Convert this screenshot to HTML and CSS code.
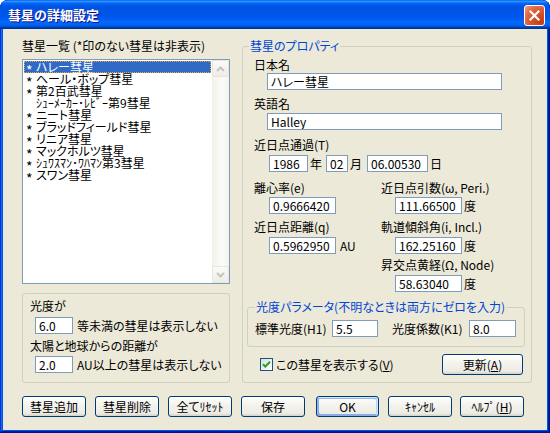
FILE: index.html
```html
<!DOCTYPE html>
<html lang="ja">
<head>
<meta charset="utf-8">
<title>彗星の詳細設定</title>
<link rel="stylesheet" href="styles.css">
</head>
<body>
<div class="window">
  <div class="titlebar">
    <span class="title">彗星の詳細設定</span>
    <span class="close"><svg width="13" height="13" viewBox="0 0 13 13"><path d="M2.5 2.5 L10.5 10.5 M10.5 2.5 L2.5 10.5" stroke="#fff" stroke-width="2.2" stroke-linecap="square" fill="none"/></svg></span>
  </div>
  <div class="client">
    <div class="main">
      <div class="left">
        <div class="list-label">彗星一覧 (*印のない彗星は非表示)</div>
        <div class="listbox">
          <ul class="items">
            <li class="sel"><span class="mark">*</span>ハレー彗星</li>
            <li><span class="mark">*</span>ヘール・ボップ彗星</li>
            <li><span class="mark">*</span>第2百武彗星</li>
            <li><span class="mark"></span>ｼｭｰﾒｰｶｰ･ﾚﾋﾞｰ第9彗星</li>
            <li><span class="mark">*</span>ニート彗星</li>
            <li><span class="mark">*</span>ブラッドフィールド彗星</li>
            <li><span class="mark">*</span>リニア彗星</li>
            <li><span class="mark">*</span>マックホルツ彗星</li>
            <li><span class="mark">*</span>ｼｭﾜｽﾏﾝ･ﾜﾊﾏﾝ第3彗星</li>
            <li><span class="mark">*</span>スワン彗星</li>
          </ul>
          <div class="scrollbar">
            <div class="sbtn"><svg width="9" height="6" viewBox="0 0 9 6"><path d="M1 5 L4.5 1.5 L8 5" stroke="#C6C5BB" stroke-width="2" fill="none"/></svg></div>
            <div class="track"></div>
            <div class="sbtn"><svg width="9" height="6" viewBox="0 0 9 6"><path d="M1 1 L4.5 4.5 L8 1" stroke="#C6C5BB" stroke-width="2" fill="none"/></svg></div>
          </div>
        </div>
        <div class="filter">
          <div class="flabel">光度が</div>
          <div class="frow frow1"><input class="tb w38" type="text" value="6.0"><span class="ftext">等未満の彗星は表示しない</span></div>
          <div class="flabel flabel2">太陽と地球からの距離が</div>
          <div class="frow frow2"><input class="tb w38" type="text" value="2.0"><span class="ftext">AU以上の彗星は表示しない</span></div>
        </div>
      </div>
      <fieldset class="props">
        <legend>彗星のプロパティ</legend>
        <div class="lbl l-jp">日本名</div>
        <input class="tb name n1" type="text" value="ハレー彗星">
        <div class="lbl l-en">英語名</div>
        <input class="tb name n2" type="text" value="Halley">
        <div class="lbl l-t">近日点通過(T)</div>
        <div class="date-row">
          <input class="tb w39" type="text" value="1986"><span class="unit u-y">年</span>
          <input class="tb w22" type="text" value="02"><span class="unit u-m">月</span>
          <input class="tb w61" type="text" value="06.00530"><span class="unit u-d">日</span>
        </div>
        <div class="elements">
          <div class="col col-l">
            <div class="lbl">離心率(e)</div>
            <div class="vrow r1"><input class="tb w67" type="text" value="0.9666420"></div>
            <div class="lbl g2">近日点距離(q)</div>
            <div class="vrow r2"><input class="tb w67" type="text" value="0.5962950"><span class="unit u-au">AU</span></div>
          </div>
          <div class="col col-r">
            <div class="lbl">近日点引数(ω, Peri.)</div>
            <div class="vrow r1"><input class="tb w67" type="text" value="111.66500"><span class="unit u-deg">度</span></div>
            <div class="lbl g2">軌道傾斜角(i, Incl.)</div>
            <div class="vrow r2"><input class="tb w67" type="text" value="162.25160"><span class="unit u-deg">度</span></div>
            <div class="lbl g3">昇交点黄経(Ω, Node)</div>
            <div class="vrow r2"><input class="tb w67" type="text" value="58.63040"><span class="unit u-deg">度</span></div>
          </div>
        </div>
        <fieldset class="photo">
          <legend>光度パラメータ(不明なときは両方にゼロを入力)</legend>
          <div class="photo-row">
            <span>標準光度(H1)</span>
            <input class="tb" type="text" value="5.5">
            <span class="pl2">光度係数(K1)</span>
            <input class="tb" type="text" value="8.0">
          </div>
        </fieldset>
        <div class="check-row">
          <span class="checkbox"><svg width="11" height="11" viewBox="0 0 11 11"><path d="M2 5.2 L4.3 7.6 L9 2.8" stroke="#21A121" stroke-width="2" fill="none"/></svg></span>
          <span class="check-label">この彗星を表示する(<u>V</u>)</span>
          <button class="btn upd" type="button">更新(<u>A</u>)</button>
        </div>
      </fieldset>
    </div>
    <div class="buttons">
      <button class="btn" type="button">彗星追加</button>
      <button class="btn" type="button">彗星削除</button>
      <button class="btn" type="button">全てﾘｾｯﾄ</button>
      <button class="btn" type="button">保存</button>
      <button class="btn ok" type="button">OK</button>
      <button class="btn cancel" type="button">ｷｬﾝｾﾙ</button>
      <button class="btn help" type="button">ﾍﾙﾌﾟ(<u>H</u>)</button>
    </div>
  </div>
</div>
</body>
</html>
```

FILE: styles.css
```css
* { box-sizing: border-box; }
html, body { margin: 0; padding: 0; }
body {
  background: #ffffff;
  font-family: "Noto Sans CJK JP", sans-serif;
  font-size: 12px;
  color: #000;
  font-feature-settings: "palt";
}
.window {
  width: 550px;
  height: 433px;
  background: #0054E3;
  border-radius: 8px 8px 0 0;
  display: flex;
  flex-direction: column;
  overflow: hidden;
  box-shadow: inset -1px -1px #00138c, inset 1px 1px #0831d9, inset -2px -2px #001ea0, inset 2px 2px #166aee;
}
.titlebar {
  height: 29px;
  flex: none;
  display: flex;
  align-items: center;
  justify-content: space-between;
  padding: 0 5px 0 8px;
  border-radius: 8px 8px 0 0;
  background: linear-gradient(180deg, #0058ee 0%, #3593ff 4%, #288eff 6%, #127dff 8%, #036ffc 10%, #0262ee 14%, #0057e5 20%, #0054e3 24%, #0055eb 56%, #005bf5 66%, #026afe 76%, #0062ef 86%, #0052d6 92%, #0040ab 94%, #003092 100%);
}
.title {
  color: #fff;
  font-weight: bold;
  font-size: 13px;
  line-height: 16px;
  text-shadow: 1px 1px #0f1089;
  font-feature-settings: normal;
  margin-top: 1px;
}
.close {
  width: 21px;
  height: 21px;
  margin-top: 2px;
  border: 1px solid #fff;
  border-radius: 3px;
  display: flex;
  align-items: center;
  justify-content: center;
  background: radial-gradient(circle at 85% 85%, #c43b10 0%, #d9532a 45%, #e46a45 70%, #f4a088 100%);
}
.client {
  flex: 1;
  margin: 0 3px 3px 3px;
  background: #ECE9D8;
  padding: 11px 0 0 19px;
  display: flex;
  flex-direction: column;
}
.main {
  display: flex;
  gap: 12px;
  height: 343px;
}
.left {
  width: 208px;
  display: flex;
  flex-direction: column;
}
.list-label {
  height: 12px;
  line-height: 12px;
  margin-bottom: 7px;
  white-space: nowrap;
}
.listbox {
  height: 225px;
  border: 1px solid #7F9DB9;
  background: #fff;
  display: flex;
}
.items {
  list-style: none;
  margin: 0;
  padding: 1px;
  flex: 1;
}
.items li {
  height: 12px;
  line-height: 12px;
  padding-left: 2px;
  white-space: nowrap;
  display: flex;
}
.items li.sel {
  background: #316AC5;
  color: #fff;
  outline: 1px dotted #E0A848;
  outline-offset: -1px;
}
.mark {
  display: block;
  width: 10px;
  height: 12px;
  flex: none;
  font-size: 14px;
  line-height: 19px;
}
.scrollbar {
  width: 17px;
  flex: none;
  display: flex;
  flex-direction: column;
  background: linear-gradient(90deg, #F2F1EB 0%, #FBFBF8 60%, #F4F3EE 100%);
}
.sbtn {
  height: 17px;
  flex: none;
  border: 1px solid #E6E5DE;
  border-radius: 2px;
  background: linear-gradient(180deg, #FAFAF7, #EEEDE7);
  display: flex;
  align-items: center;
  justify-content: center;
}
.track { flex: 1; }
.filter {
  margin-top: 9px;
  height: 90px;
  border: 1px solid #D0D0BF;
  border-radius: 3px;
  padding: 5px 0 0 7px;
}
.flabel {
  height: 14px;
  line-height: 14px;
  white-space: nowrap;
}
.flabel2 { margin-top: 5px; }
.frow {
  display: flex;
  align-items: center;
  height: 17px;
  margin-left: 5px;
  white-space: nowrap;
}
.frow1 { margin-top: 4px; }
.frow2 { margin-top: 3px; }
.ftext { margin-left: 4px; }
.tb {
  height: 17px;
  border: 1px solid #7F9DB9;
  background: #fff;
  padding: 0 3px;
  margin: 0;
  font: inherit;
  font-size: 12px;
  color: #000;
  outline: none;
  border-radius: 0;
}
.w38 { width: 38px; }
.w39 { width: 39px; }
.w22 { width: 22px; }
.w61 { width: 61px; }
.w67 { width: 67px; }
.props {
  width: 290px;
  margin: 0;
  border: 1px solid #D0D0BF;
  border-radius: 3px;
  padding: 0 8px 7px 11px;
  min-width: 0;
}
legend {
  color: #0046D5;
  font-size: 12px;
  line-height: 12px;
  height: 12px;
  padding: 0 1px;
  white-space: nowrap;
}
.props > legend { margin-left: -5px; }
.lbl {
  height: 14px;
  line-height: 14px;
  white-space: nowrap;
}
.l-jp { margin-top: 6px; }
.l-en { margin-top: 7px; }
.l-t { margin-top: 8px; }
.name {
  display: block;
  width: 235px;
  margin-left: 13px;
}
.n1 { margin-top: 1px; }
.n2 { margin-top: 2px; }
.date-row {
  display: flex;
  align-items: center;
  height: 17px;
  margin: 3px 0 0 15px;
}
.unit { white-space: nowrap; }
.u-y { margin: 0 4px 0 2px; }
.u-m { margin: 0 5px 0 2px; }
.u-d { margin-left: 2px; }
.u-au { margin-left: 4px; }
.u-deg { margin-left: 2px; }
.elements {
  display: flex;
  margin-top: 9px;
}
.col { display: flex; flex-direction: column; }
.col-l { width: 127px; }
.col-r { flex: 1; }
.vrow {
  display: flex;
  align-items: center;
  height: 17px;
  margin-left: 15px;
}
.col-r .vrow { margin-left: 14px; }
.r1 { margin-top: 2px; }
.r2 { margin-top: 3px; }
.g2 { margin-top: 6px; }
.g3 { margin-top: 4px; }
.photo {
  width: 278px;
  margin: 9px 0 0 -7px;
  border: 1px solid #D0D0BF;
  border-radius: 3px;
  padding: 0 0 9px 7px;
  min-width: 0;
}
.photo-row {
  display: grid;
  grid-template-columns: 77px 46px 91px 47px;
  align-items: center;
  height: 17px;
  margin-top: 7px;
  white-space: nowrap;
}
.photo-row .tb { width: 100%; }
.pl2 { padding-left: 14px; }
.check-row {
  display: flex;
  align-items: center;
  height: 21px;
  margin-top: 7px;
}
.checkbox {
  width: 13px;
  height: 13px;
  margin-left: 6px;
  border: 1px solid #1C5180;
  background: linear-gradient(135deg, #DCDCD7 0%, #FFFFFF 100%);
  display: flex;
  align-items: center;
  justify-content: center;
}
.check-label {
  margin-left: 3px;
  white-space: nowrap;
}
.btn {
  height: 21px;
  width: 64px;
  margin: 0;
  padding: 0;
  border: 1px solid #003C74;
  border-radius: 3px;
  background: linear-gradient(180deg, #FFFFFF 0%, #F4F3EE 40%, #ECEBE6 86%, #D6D0C5 100%);
  font: inherit;
  font-size: 12px;
  color: #000;
  white-space: nowrap;
}
.upd {
  width: 81px;
  margin-left: auto;
}
.buttons {
  display: flex;
  gap: 9px;
  margin-top: 13px;
}
.ok {
  width: 63px;
  margin-left: 2px;
  box-shadow: inset -1px 1px #cee7ff, inset 1px 2px #98b8ea, inset -2px 2px #bcd4f6, inset 1px -1px #89ade4, inset 2px -2px #89ade4;
}
.help { margin-left: -1px; }
```
